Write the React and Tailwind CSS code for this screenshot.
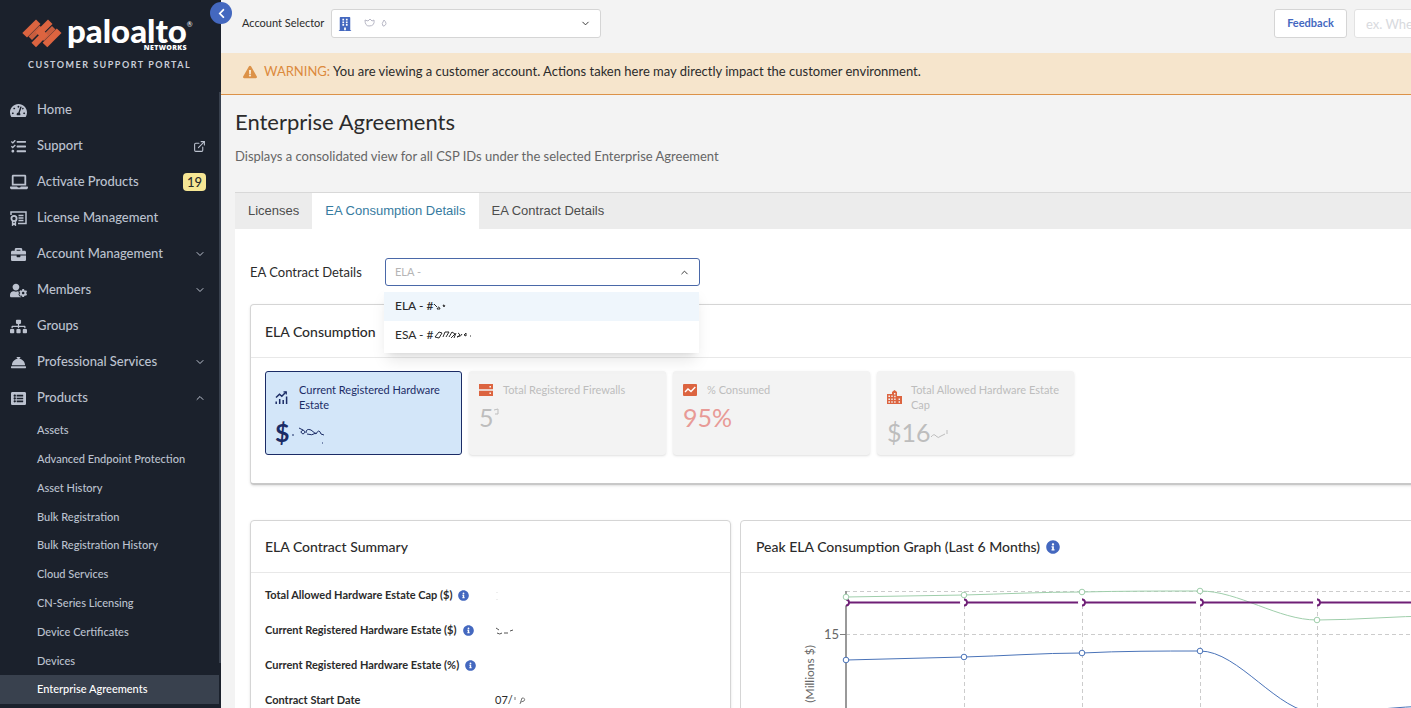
import React, { useState } from 'react';
import {
  FaTachometerAlt,
  FaTasks,
  FaLaptop,
  FaBriefcase,
  FaUserCog,
  FaSitemap,
  FaConciergeBell,
  FaListAlt,
  FaBuilding,
  FaExclamationTriangle,
  FaInfoCircle,
  FaChevronLeft,
} from 'react-icons/fa';
import { FiChevronDown, FiChevronUp, FiExternalLink } from 'react-icons/fi';

const LicenseIcon = () => (
  <svg width="17" height="15" viewBox="0 0 17 15" fill="none" stroke="currentColor" strokeWidth="1.5">
    <path d="M1 4V1h15v11.5H8" />
    <circle cx="4" cy="7.5" r="2.6" strokeWidth="1.8" />
    <path d="M2.6 10v4L4 13l1.4 1v-4" />
    <path d="M8.5 4.5h5M8.5 7h5M8.5 9.5h5" strokeWidth="1.3" />
  </svg>
);

const TrendIcon = () => (
  <svg width="13" height="13" viewBox="0 0 13 13" fill="none" stroke="currentColor" strokeWidth="1.5">
    <path d="M1 6.5L4.5 3.2l2.3 2L11 1" />
    <path d="M8.5 .8H11.3V3.5" strokeWidth="1.2" />
    <path d="M1.2 13v-2.5M4.7 13V8M8.2 13V9M11.6 13V5.5" />
  </svg>
);

const ServerIcon = () => (
  <svg width="14" height="12" viewBox="0 0 14 12">
    <path fill="currentColor" d="M0 0h14v5.3H0zM0 6.7h14V12H0z" />
    <path fill="#fff" d="M10.5 2h1.4v1.4h-1.4zM10.5 8.6h1.4V10h-1.4z" />
  </svg>
);

const ConsumedIcon = () => (
  <svg width="14" height="12" viewBox="0 0 14 12">
    <rect width="14" height="12" rx="1" fill="currentColor" />
    <path d="M2 8l3-3 3 2.5L12.3 3" fill="none" stroke="#fff" strokeWidth="1.4" />
  </svg>
);

const CityIcon = () => (
  <svg width="15" height="14" viewBox="0 0 15 14">
    <path fill="currentColor" d="M0 4h5V2l2.5-2L10 2v4h5v8H0z" />
    <path
      fill="#f3f3f3"
      d="M1.4 5.6H3v1.5H1.4zM1.4 8.4H3v1.5H1.4zM1.4 11.2H3v1.5H1.4zM4.3 5.6h1.4v1.5H4.3zM4.3 8.4h1.4v1.5H4.3zM4.3 11.2h1.4v1.5H4.3zM7 3h1.4v1.5H7zM7.2 5.8h1.4v1.5H7.2zM7.2 8.4h1.4v1.5H7.2zM7.2 11.2h1.4v1.5H7.2zM11.6 8.4H13v1.5h-1.4zM11.6 11.2H13v1.5h-1.4z"
    />
  </svg>
);

const Scribble = ({ d, width, height = 12, className = '' }) => (
  <svg width={width} height={height} viewBox={`0 0 ${width} ${height}`} fill="none" stroke="currentColor" aria-hidden="true" className={className}>
    <path d={d} />
  </svg>
);

const menu = [
  { label: 'Home', icon: <FaTachometerAlt size={17} /> },
  { label: 'Support', icon: <FaTasks size={15} />, external: true },
  { label: 'Activate Products', icon: <FaLaptop size={18} />, badge: 19 },
  { label: 'License Management', icon: <LicenseIcon /> },
  { label: 'Account Management', icon: <FaBriefcase size={15} />, chevron: 'down' },
  { label: 'Members', icon: <FaUserCog size={17} />, chevron: 'down' },
  { label: 'Groups', icon: <FaSitemap size={17} /> },
  { label: 'Professional Services', icon: <FaConciergeBell size={15} />, chevron: 'down' },
  { label: 'Products', icon: <FaListAlt size={15} />, chevron: 'up' },
];

const products = [
  'Assets',
  'Advanced Endpoint Protection',
  'Asset History',
  'Bulk Registration',
  'Bulk Registration History',
  'Cloud Services',
  'CN-Series Licensing',
  'Device Certificates',
  'Devices',
  'Enterprise Agreements',
];

const Logo = () => (
  <div className="h-[92px] shrink-0 pl-[22px] pt-[15px] text-white">
    <div className="flex items-start">
      <svg width="40" height="29" viewBox="0 0 40 29" fill="#dc6440" className="mt-1">
        <path d="M14 .5L18.500 5 5 18.500.3 14z" />
        <path d="M26 .5L30.500 5 18 17.500 13.500 13z" />
        <path d="M21.500 11.500L26 16 14 28.300 9.500 23.800z" />
        <path d="M34.800 9.500L39.500 14 25.300 28.300 20.600 23.800z" />
        <path d="M17.500 6.500L21 10 10 21 6.500 17.500z" opacity=".9" />
        <path d="M30 7L33.500 10.500 22 22 18.500 18.500z" opacity=".9" />
      </svg>
      <div className="relative ml-[5px]">
        <span className="block font-[Lato] text-[33px] font-black leading-[30px]">paloalto</span>
        <span className="absolute right-0 top-[29px] font-['Open_Sans'] text-[7px] font-extrabold leading-[8px] tracking-wider">NETWORKS</span>
      </div>
      <span className="mt-[5px] text-[7px] leading-[8px]">®</span>
    </div>
    <p className="ml-[6px] mt-[11px] text-[9px] font-bold leading-[12px] tracking-[1.5px] text-[#c9ced8]">CUSTOMER SUPPORT PORTAL</p>
  </div>
);

const Sidebar = () => (
  <aside className="relative flex w-[221px] shrink-0 flex-col bg-[#1b212c] text-[#bcc2cf]">
    <Logo />
    <nav>
      {menu.map((item) => (
        <a key={item.label} href="#" className="flex h-9 items-center pr-[15px] text-[13px] font-medium">
          <span className="flex w-[37px] shrink-0 justify-center">{item.icon}</span>
          <span className="flex-1">{item.label}</span>
          {item.external && <FiExternalLink size={13} />}
          {item.badge && <span className="rounded bg-[#f6e694] px-1 text-[13px] leading-[18px] text-[#2b2b2b]">{item.badge}</span>}
          {item.chevron === 'down' && <FiChevronDown size={12} />}
          {item.chevron === 'up' && <FiChevronUp size={12} />}
        </a>
      ))}
      <div className="grid h-72 grid-rows-10">
        {products.map((name) => (
          <a
            key={name}
            href="#"
            className={`mr-[2px] flex items-center pl-[37px] text-[11px] font-medium ${name === 'Enterprise Agreements' ? 'bg-[#39414e] text-white' : ''}`}
          >
            {name}
          </a>
        ))}
      </div>
    </nav>
    <div className="absolute right-0 top-[92px] h-[571px] w-[2px] bg-[#39414e]" />
    <button type="button" aria-label="Collapse menu" className="absolute -right-[11px] top-[2px] z-10 flex h-[22px] w-[22px] items-center justify-center rounded-full bg-[#4468bf] text-white">
      <FaChevronLeft size={11} />
    </button>
  </aside>
);

const Tile = ({ icon, title, active, children }) => (
  <div
    className={`h-[84px] w-[197px] shrink-0 rounded-[3px] border px-[9px] pt-[10px] ${
      active ? 'border-[#1b2c66] bg-[#d3e6f9] text-[#1b2c66]' : 'border-[#f3f3f3] bg-[#f3f3f3] text-[#bdbdbd] shadow'
    }`}
  >
    <div className="flex items-center">
      <span className={`w-6 shrink-0 ${active ? '' : 'text-[#dc6440]'}`}>{icon}</span>
      <span className="text-[11px] leading-[15px]">{title}</span>
    </div>
    <div className="mt-[7px] flex h-[26px] items-center text-[25px] leading-[26px]">{children}</div>
  </div>
);

const summary = [
  { label: 'Total Allowed Hardware Estate Cap ($)', info: true, value: <Scribble width={20} d="M2 2v1M2 9v1" className="text-[#dddddd]" /> },
  { label: 'Current Registered Hardware Estate ($)', info: true, value: <Scribble width={20} d="M1 3l3 2M2 8q3 2 5 0M9 8h4M15 6l3-1" className="text-[#555555]" /> },
  { label: 'Current Registered Hardware Estate (%)', info: true },
  {
    label: 'Contract Start Date',
    value: (
      <>
        07/
        <Scribble width={14} d="M2 2v3M7 9l2-6q4 0 2 3l-3 1" className="text-[#777777]" />
      </>
    ),
  },
];

const gridX = [105, 223, 341, 459, 576];
const green = [24, 22, 19, 18, 47];
const blue = [87, 84, 80, 78];

const Graph = () => (
  <svg width="670" height="160" viewBox="0 0 670 160" fill="none">
    <g stroke="#cccccc" strokeDasharray="4 3">
      <path d="M105 18.5H670M105 61.5H670" />
      {gridX.map((x) => (
        <path key={x} d={`M${x}.5 18V160`} />
      ))}
    </g>
    <path d="M105 18V160" stroke="#999999" strokeWidth="2" />
    <path d="M99 61.5h6" stroke="#808080" />
    <text x="98" y="66" textAnchor="end" fontSize="13" fill="#666666">15</text>
    <text transform="translate(73 72) rotate(-90)" textAnchor="end" fontSize="12" fill="#666666">(Millions $)</text>
    <path d="M105 24L223 22C262 21 302 19 341 19C380 18 420 18 459 18C498 18 537 47 576 47C615 47 655 43 694 43" stroke="#9fceab" />
    <path d="M105 87L223 84C262 83 302 80 341 80C380 78 420 78 459 78C498 78 537 140 576 140C615 140 655 133 694 133" stroke="#4a73b8" />
    <path d="M105 29.5H670" stroke="#6f1f76" strokeWidth="2" />
    {gridX.map((x) => (
      <g key={x}>
        <circle cx={x - 1} cy="29.5" r="3" fill="#fff" />
        <path d={`M${x} 26.5a3 3 0 0 1 0 6`} stroke="#6f1f76" strokeWidth="1.8" />
      </g>
    ))}
    {green.map((y, i) => (
      <circle key={gridX[i]} cx={gridX[i]} cy={y} r="2.8" fill="#fff" stroke="#9fceab" />
    ))}
    {blue.map((y, i) => (
      <circle key={gridX[i]} cx={gridX[i]} cy={y} r="2.8" fill="#fff" stroke="#4a73b8" />
    ))}
  </svg>
);

const ContractPicker = () => {
  const [contract, setContract] = useState('ELA');

  return (
    <div className="flex items-center">
      <label htmlFor="contract" className="w-[135px] pt-px text-[13px]">EA Contract Details</label>
      <div className="relative">
        <select
          id="contract"
          value={contract}
          onChange={(e) => setContract(e.target.value)}
          className="block h-7 w-[315px] appearance-none rounded-[3px] border border-[#4a68a8] bg-white px-[9px] text-[11px] text-[#b5b5b5] outline-none"
        >
          <option value="ELA">ELA -</option>
          <option value="ESA">ESA -</option>
        </select>
        <FiChevronUp size={11} className="absolute right-[10px] top-[9px]" />
        <ul className="absolute -left-px top-[29px] z-20 w-[315px] bg-white pb-[3px] pt-[5px] text-[12px] shadow-lg">
          <li className="flex h-[29px] items-center bg-[#eff6fc] px-[11px] pb-[2px] font-medium">
            ELA - #
            <Scribble width={14} d="M1 4l3 3M4 9q2-4 3 0zM10 5q3 0 1 2z" />
          </li>
          <li className="flex h-[29px] items-center px-[11px] pb-[2px]">
            ESA - #
            <Scribble width={38} d="M1 8l4-5 3 1-3 5zM9 8l2-5h4l-3 5M15 8l3-5 3 2-4 4M22 4l-2 5M24 4q4 2-1 4q5-1 5-3M30 6l2-2v3zM36 7h1" />
          </li>
        </ul>
      </div>
    </div>
  );
};

const App = () => (
  <div className="flex h-screen overflow-hidden bg-[#f3f3f3] font-[Lato,sans-serif] text-[#2b2b2b]">
    <Sidebar />
    <div className="flex min-w-0 flex-1 flex-col">
      <header className="flex h-[53px] shrink-0 items-center overflow-hidden pb-[6px] pl-[21px]">
        <label htmlFor="account" className="w-[89px] shrink-0 whitespace-nowrap text-[11px]">Account Selector</label>
        <div className="relative">
          <select id="account" className="block h-[29px] w-[270px] appearance-none rounded-[3px] border border-[#d5d5d5] bg-white pl-[34px] text-[12px]">
            <option value=""></option>
          </select>
          <FaBuilding size={14} className="absolute left-[7px] top-[8px] text-[#4468bf]" />
          <Scribble width={26} d="M2 3l3 1 2-2 2 2 2-1q1 6-5 6Q2 9 2 3M20 9q-2-2 1-6q4 4 0 6z" className="absolute left-[32px] top-[8px] text-[#b8b8c6]" />
          <FiChevronDown size={11} className="absolute right-[10px] top-[9px]" />
        </div>
        <div className="-mr-[66px] ml-auto flex gap-[7px]">
          <button type="button" className="h-[29px] w-[73px] rounded-[3px] border border-[#d5d5d5] bg-white text-[11px] font-bold text-[#4468bf]">Feedback</button>
          <input aria-label="Search" placeholder="ex. Where" className="h-[29px] w-[123px] rounded-[3px] border border-[#e2e2e2] bg-white px-[11px] text-[13px] placeholder:text-[#d8dade]" />
        </div>
      </header>

      <div className="flex h-[42px] shrink-0 items-center border-b border-[#dc9248] bg-[#f6e5cc] pb-[3px] pl-[22px] text-[13px]">
        <FaExclamationTriangle size={14} className="mr-[7px] text-[#dc9248]" />
        <span className="mr-[3px] text-[#dc8a3c]">WARNING:</span>
        You are viewing a customer account. Actions taken here may directly impact the customer environment.
      </div>

      <main className="flex min-h-0 flex-1 flex-col overflow-hidden pl-[14px]">
        <h1 className="mt-3 text-[22px] leading-[30px]">Enterprise Agreements</h1>
        <p className="mt-[10px] text-[13px] leading-[18px] text-[#666666]">Displays a consolidated view for all CSP IDs under the selected Enterprise Agreement</p>

        <div className="mt-[27px] flex h-[37px] shrink-0 border-t border-[#d8d8d8] bg-[#ececec] font-['Liberation_Sans'] text-[13px] text-[#4d4d4d]">
          <a href="#" className="flex items-center px-[13px]">Licenses</a>
          <a href="#" className="flex items-center bg-white px-[13px] text-[#367b9f]">EA Consumption Details</a>
          <a href="#" className="flex items-center px-[13px]">EA Contract Details</a>
        </div>

        <div className="flex-1 bg-white pl-[15px] pt-[29px]">
          <ContractPicker />

          <section className="-mr-2 mt-[18px] h-[181px] rounded border border-[#d5d5d5] border-b-2 border-b-[#c8c8c8] shadow-sm">
            <h2 className="flex h-[53px] items-center border-b border-[#e8e8e8] px-[14px] text-[14px] font-medium">ELA Consumption</h2>
            <div className="flex gap-[7px] px-[14px] pt-[13px]">
              <Tile icon={<TrendIcon />} title="Current Registered Hardware Estate" active>
                <span className="font-bold">$</span>
                <Scribble width={36} height={26} d="M2 16h2M9 9l4 2q-4 2 0 4q4-2 0-4M16 14q0-5 5-3l5 4q3-6 5 0l3 1M17 15q5 2 9-1M32 24h1" />
              </Tile>
              <Tile icon={<ServerIcon />} title="Total Registered Firewalls">
                5
                <Scribble width={8} height={26} d="M0 6l4-1v5h-3" />
              </Tile>
              <Tile icon={<ConsumedIcon />} title="% Consumed">
                <span className="text-[#e89a96]">95%</span>
              </Tile>
              <Tile icon={<CityIcon />} title="Total Allowed Hardware Estate Cap">
                $16
                <Scribble width={22} height={26} d="M0 18q3-4 5-1t5 0l4-2M16 11v4" />
              </Tile>
            </div>
          </section>

          <div className="-mr-2 mt-[35px] flex gap-[9px]">
            <section className="w-[481px] shrink-0 rounded border border-[#d5d5d5] pb-4 shadow-sm">
              <h2 className="flex h-[52px] items-center border-b border-[#e8e8e8] px-[14px] text-[14px] font-medium">ELA Contract Summary</h2>
              <dl className="pt-[5px] text-[11px]">
                {summary.map((row) => (
                  <div key={row.label} className="flex h-[35px] items-center px-[14px]">
                    <dt className="flex w-[230px] items-center gap-[6px] font-bold">
                      {row.label}
                      {row.info && <FaInfoCircle size={11} className="text-[#4468bf]" />}
                    </dt>
                    <dd className="flex items-center">{row.value}</dd>
                  </div>
                ))}
              </dl>
            </section>
            <section className="min-w-0 flex-1 overflow-hidden rounded border border-[#d5d5d5]">
              <h2 className="flex h-[52px] items-center gap-[6px] border-b border-[#e8e8e8] px-[15px] text-[14px] font-medium">
                Peak ELA Consumption Graph (Last 6 Months)
                <FaInfoCircle size={14} className="text-[#4468bf]" />
              </h2>
              <Graph />
            </section>
          </div>
        </div>
      </main>
    </div>
  </div>
);

export default App;
